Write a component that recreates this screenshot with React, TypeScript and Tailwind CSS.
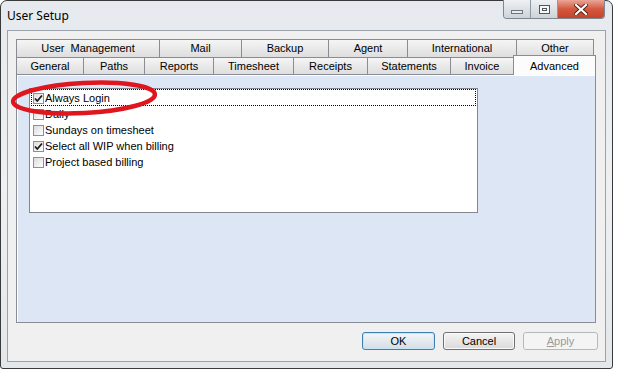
import React from 'react';

const row1 = [
  { label: 'User  Management', w: 'w-[143px]' },
  { label: 'Mail', w: 'w-[82px]' },
  { label: 'Backup', w: 'w-[87px]' },
  { label: 'Agent', w: 'w-[79px]' },
  { label: 'International', w: 'w-[109px]' },
  { label: 'Other', w: 'w-[78px] border-r' },
];

const row2 = [
  { label: 'General', w: 'w-[67px]' },
  { label: 'Paths', w: 'w-[61px]' },
  { label: 'Reports', w: 'w-[69px]' },
  { label: 'Timesheet', w: 'w-[80px]' },
  { label: 'Receipts', w: 'w-[74px]' },
  { label: 'Statements', w: 'w-[83px]' },
  { label: 'Invoice', w: 'w-[63px]' },
];

const options = [
  { label: 'Always Login', checked: true, focus: true },
  { label: 'Daily', checked: false },
  { label: 'Sundays on timesheet', checked: false },
  { label: 'Select all WIP when billing', checked: true },
  { label: 'Project based billing', checked: false },
];

const Check = ({ checked }: { checked: boolean }) => (
  <span className="mt-[3px] w-[11px] h-[11px] shrink-0 border border-[#8e8f8f] bg-gradient-to-br from-[#dcdcdc] to-white flex items-center justify-center">
    {checked && (
      <svg width="9" height="9" viewBox="0 0 9 9">
        <path d="M1 4.5 L3.3 7 L8 1.5" fill="none" stroke="#1a1a1a" strokeWidth="1.8" />
      </svg>
    )}
  </span>
);

const Tab = ({ label, w }: { label: string; w: string }) => (
  <div
    className={`${w} h-full border-t border-l border-[#898c95] bg-gradient-to-b from-[#f5f5f5] to-[#dedede] flex items-center justify-center whitespace-pre text-[11px] text-black`}
  >
    {label}
  </div>
);

export default function App() {
  return (
    <div className="relative w-[619px] h-[371px] bg-white font-['Liberation_Sans',Arial,sans-serif]">
      <div className="w-[613px] h-[369px] rounded-t-[7px] rounded-b-[3px] border border-[#3a3a3a] bg-gradient-to-b from-[#e6eaee] via-[#eef0f2] to-[#e4e7ea] flex flex-col">
        {/* Title bar */}
        <div className="h-[29px] flex items-start justify-between pl-[6px] pr-[7px]">
          <span className="h-full flex items-center text-[12px] text-black font-['Noto_Sans',sans-serif]">User Setup</span>
          <div className="flex h-[19px] -mt-px rounded-b-[4px] border border-t-0 border-[#7d8790] overflow-hidden">
            <div className="w-[27px] h-full bg-gradient-to-b from-[#eef1f4] to-[#cdd3d9] border-r border-[#8f99a2] flex items-end justify-center pb-[4px]">
              <span className="w-[12px] h-[4px] border border-[#6e757c] bg-[#e9ecef]" />
            </div>
            <div className="w-[27px] h-full bg-gradient-to-b from-[#eef1f4] to-[#cdd3d9] border-r border-[#8f99a2] flex items-center justify-center">
              <span className="w-[11px] h-[9px] border border-[#4f565c] bg-[#f4f6f8] flex items-center justify-center">
                <span className="w-[5px] h-[3px] border border-[#4f565c]" />
              </span>
            </div>
            <div className="w-[46px] h-full bg-gradient-to-b from-[#e9a597] via-[#d4583f] to-[#c7432b] flex items-center justify-center">
              <svg width="14" height="11" viewBox="0 0 14 11">
                <path d="M2 1 L12 10 M12 1 L2 10" stroke="#5a1c12" strokeWidth="4" strokeLinecap="square" />
                <path d="M2 1 L12 10 M12 1 L2 10" stroke="#ffffff" strokeWidth="2.2" strokeLinecap="square" />
              </svg>
            </div>
          </div>
        </div>

        {/* Client area */}
        <div className="flex-1 mx-[6px] mb-[6px] border border-[#9aa3ab] bg-[#f0f0f0] pl-[8px] pt-[8px] flex flex-col">
          <div className="h-[18px] flex">
            {row1.map((t) => (
              <Tab key={t.label} label={t.label} w={t.w} />
            ))}
          </div>
          <div className="h-[17px] flex">
            {row2.map((t) => (
              <Tab key={t.label} label={t.label} w={t.w} />
            ))}
            <div className="relative z-10 -mt-[2px] w-[83px] h-[20px] border border-b-0 border-[#898c95] bg-[#fcfcfc] flex justify-center pt-[2px] text-[11px] text-black">
              Advanced
            </div>
          </div>

          {/* Tab page */}
          <div className="w-[580px] h-[249px] border border-[#898c95] bg-[#dce6f4] shadow-[inset_1px_1px_0_#ffffff] pl-[12px] pt-[13px]">
            <div className="w-[449px] h-[125px] border border-[#828790] bg-white px-px pt-0">
              {options.map((o) => (
                <div
                  key={o.label}
                  className={`h-[16px] flex items-start pl-[1px] ${o.focus ? 'border border-dotted border-black h-[17px] -mb-px' : 'border border-transparent'}`}
                >
                  <Check checked={o.checked} />
                  <span className="ml-px text-[11px] leading-[14px] mt-px text-black whitespace-nowrap">{o.label}</span>
                </div>
              ))}
            </div>
          </div>

          {/* Buttons */}
          <div className="mt-[9px] flex justify-end gap-[8px] pr-[7px]">
            <button className="w-[73px] h-[18px] rounded-[3px] border border-[#3c7fb1] bg-gradient-to-b from-[#f2f6f9] to-[#d6dde3] shadow-[inset_0_0_0_1px_#c5e6f8] text-[11px] text-black">
              OK
            </button>
            <button className="w-[72px] h-[18px] rounded-[3px] border border-[#707070] bg-gradient-to-b from-[#f4f4f4] to-[#dadada] shadow-[inset_0_0_0_1px_#fafafa] text-[11px] text-black">
              Cancel
            </button>
            <button className="w-[75px] h-[18px] rounded-[3px] border border-[#b5b9bc] bg-[#f4f4f4] text-[11px] text-[#9a9a9a]">
              <span className="underline">A</span>pply
            </button>
          </div>
        </div>
      </div>

      {/* Red annotation ellipse */}
      <svg className="absolute left-[8px] top-[78px]" width="152" height="40" viewBox="0 0 152 40">
        <ellipse cx="76" cy="20" rx="71" ry="15" transform="rotate(-3 76 20)" fill="none" stroke="#e0161e" strokeWidth="4.5" />
      </svg>
    </div>
  );
}
